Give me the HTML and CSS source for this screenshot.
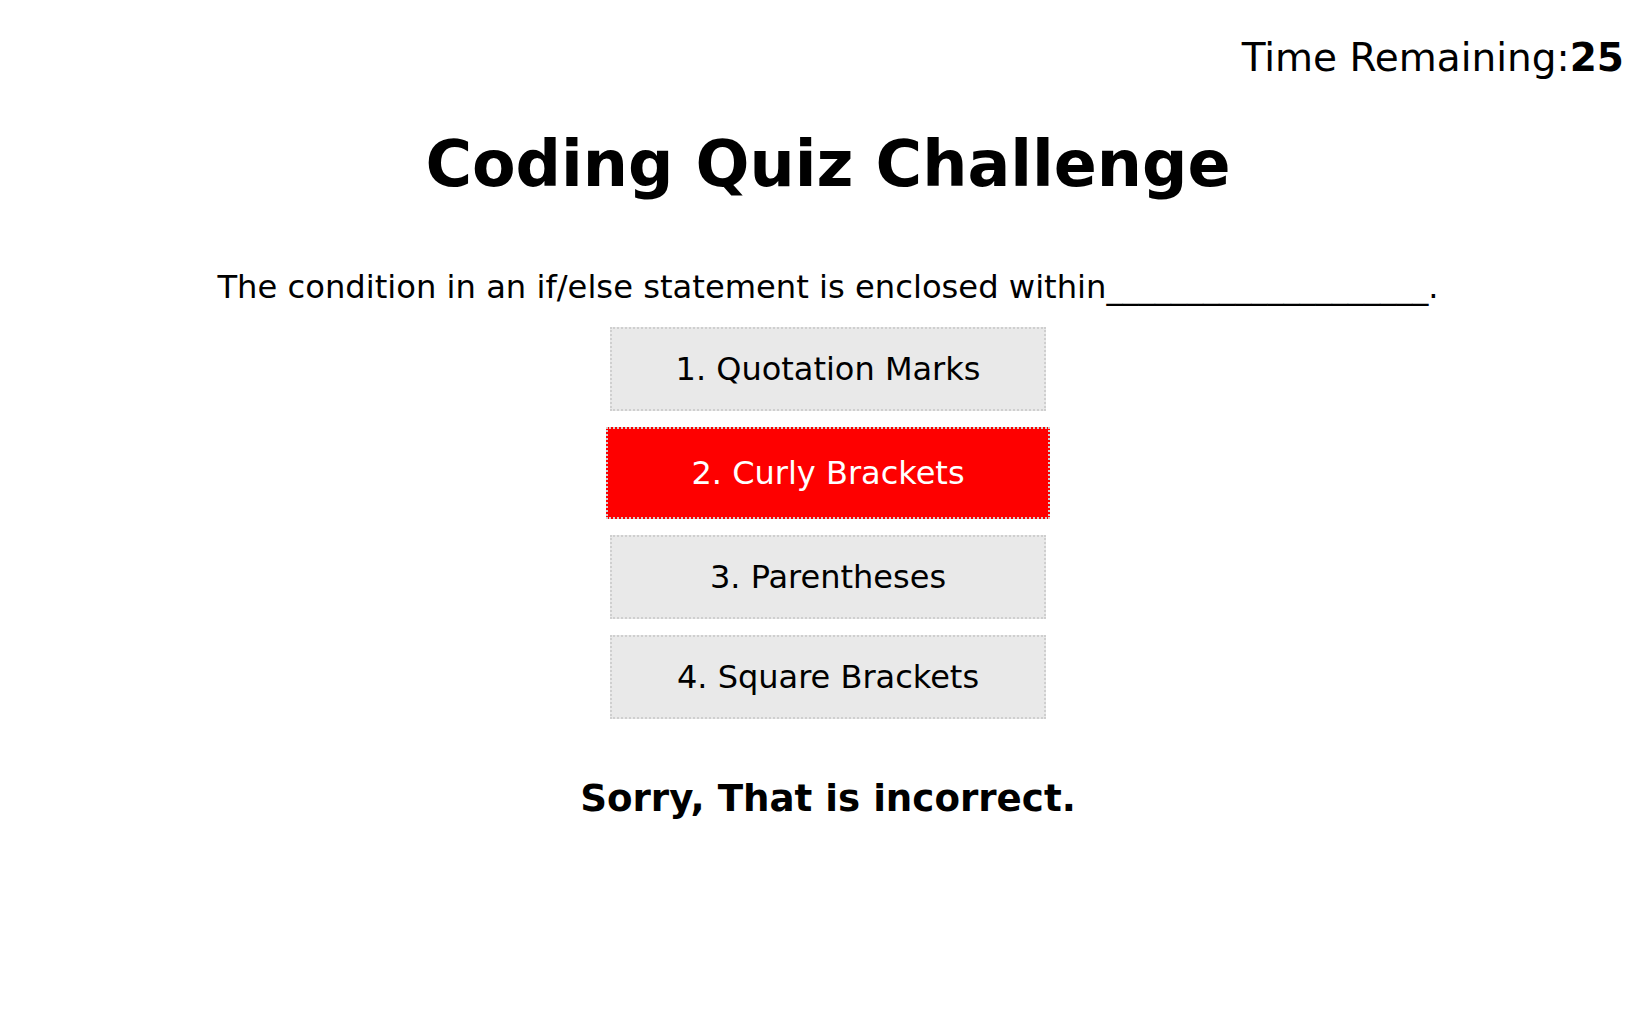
FILE: index.html
```html
<!DOCTYPE html>
<html lang="en">
<head>
<meta charset="utf-8">
<title>Coding Quiz Challenge</title>
<link rel="stylesheet" href="styles.css">
</head>
<body>
<header class="topbar">
  <div class="timer">Time Remaining:<span class="timer-value">25</span></div>
</header>
<main class="quiz">
  <h1 class="title">Coding Quiz Challenge</h1>
  <p class="question">The condition in an if/else statement is enclosed within____________________.</p>
  <div class="choices">
    <button class="choice">1. Quotation Marks</button>
    <button class="choice choice-wrong">2. Curly Brackets</button>
    <button class="choice">3. Parentheses</button>
    <button class="choice">4. Square Brackets</button>
  </div>
  <p class="feedback">Sorry, That is incorrect.</p>
</main>
</body>
</html>
```

FILE: styles.css
```css
html, body {
  margin: 0;
  padding: 0;
  background: #ffffff;
  color: #000000;
  font-family: "DejaVu Sans", Verdana, sans-serif;
}

.topbar {
  display: flex;
  justify-content: flex-end;
  padding: 33px 20px 0 0;
}

.timer {
  font-size: 39px;
  line-height: 50px;
}

.timer-value {
  font-weight: bold;
}

.quiz {
  display: flex;
  flex-direction: column;
  align-items: center;
  padding-left: 12px;
}

.title {
  font-size: 63.5px;
  font-weight: bold;
  line-height: 76px;
  margin: 43px 0 0 0;
}

.question {
  font-size: 32.2px;
  line-height: 40px;
  margin: 65px 0 0 0;
}

.choices {
  display: flex;
  flex-direction: column;
  align-items: center;
  gap: 16px;
  margin-top: 20px;
}

.choice {
  width: 436px;
  height: 84px;
  box-sizing: border-box;
  border: 2px dotted #cfcfcf;
  background: #e9e9e9;
  color: #000000;
  font-family: "DejaVu Sans", Verdana, sans-serif;
  font-size: 32px;
  padding: 0;
}

.choice-wrong {
  width: 444px;
  height: 92px;
  background: #fe0000;
  color: #ffffff;
}

.feedback {
  font-size: 37.2px;
  font-weight: bold;
  margin: 57px 0 0 0;
}
```
